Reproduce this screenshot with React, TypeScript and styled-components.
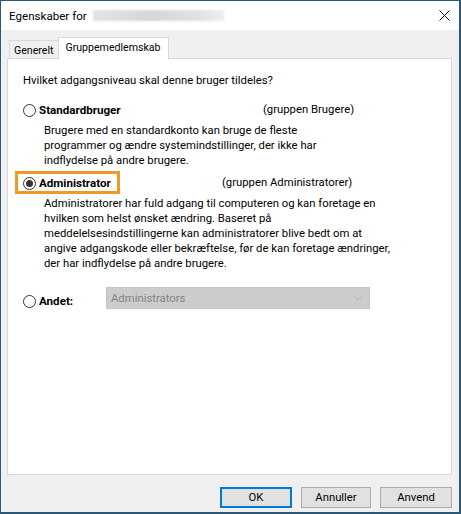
import styled, { createGlobalStyle } from "styled-components";

const GlobalStyle = createGlobalStyle`
  html, body {
    margin: 0;
    padding: 0;
    background: #ffffff;
  }
  body {
    font-family: Roboto, "Noto Sans", sans-serif;
    font-size: 11.3px;
    color: #000000;
  }
`;

const Window = styled.div`
  box-sizing: border-box;
  width: 461px;
  height: 514px;
  border: 1px solid #2b5876;
  border-right-width: 2px;
  border-bottom-width: 2px;
  display: flex;
  flex-direction: column;
  background: #f0f0f0;
`;

const TitleBar = styled.div`
  height: 29px;
  background: #ffffff;
  display: flex;
  align-items: center;
  padding-left: 8px;
  padding-right: 9px;
`;

const TitleText = styled.span`
  font-size: 11.6px;
  line-height: 16px;
`;

const BlurredName = styled.div`
  width: 131px;
  height: 11px;
  margin-left: 6px;
  background: linear-gradient(90deg, #e4e4e4, #d6d6d6 45%, #e2e2e2 80%, #eeeeee);
  filter: blur(1px);
`;

const CloseButton = styled.div`
  margin-left: auto;
  width: 11px;
  height: 11px;
  display: flex;
`;

const Body = styled.div`
  flex: 1;
  display: flex;
  flex-direction: column;
  padding: 0 7px 0 6px;
`;

const TabStrip = styled.div`
  height: 28px;
  display: flex;
  align-items: flex-end;
  padding-left: 2px;
`;

const Tab = styled.div<{ $active?: boolean }>`
  box-sizing: border-box;
  position: relative;
  display: flex;
  align-items: center;
  border: 1px solid #d9d9d9;
  border-bottom: none;
  font-size: 10.6px;
  white-space: nowrap;
  height: ${({ $active }) => ($active ? "22px" : "18px")};
  margin-bottom: ${({ $active }) => ($active ? "-1px" : "0")};
  margin-left: ${({ $active }) => ($active ? "-1px" : "0")};
  padding: ${({ $active }) => ($active ? "0 7px 3px 6px" : "1px 5px 0 4px")};
  background: ${({ $active }) => ($active ? "#ffffff" : "#f0f0f0")};
  z-index: ${({ $active }) => ($active ? 1 : 0)};
`;

const Panel = styled.div`
  box-sizing: border-box;
  height: 417px;
  background: #ffffff;
  border: 1px solid #d9d9d9;
  padding: 14px 15px 0 15px;
  display: flex;
  flex-direction: column;
`;

const Question = styled.div`
  line-height: 16px;
  white-space: nowrap;
`;

const OptionRow = styled.div<{ $gap: number }>`
  position: relative;
  display: flex;
  align-items: center;
  height: 16px;
  margin-top: ${({ $gap }) => `${$gap}px`};
  white-space: nowrap;
`;

const RadioLabel = styled.div<{ $width: number }>`
  display: flex;
  align-items: center;
  width: ${({ $width }) => `${$width}px`};
  flex-shrink: 0;
`;

const Radio = styled.span<{ $checked?: boolean }>`
  box-sizing: border-box;
  width: 13px;
  height: 13px;
  border-radius: 50%;
  border: 1px solid #333333;
  background: #ffffff;
  display: flex;
  align-items: center;
  justify-content: center;
  margin-right: 3px;
  &::after {
    content: "";
    display: ${({ $checked }) => ($checked ? "block" : "none")};
    width: 7px;
    height: 7px;
    border-radius: 50%;
    background: #333333;
  }
`;

const OptionTitle = styled.span`
  font-size: 11.6px;
  font-weight: 700;
  line-height: 16px;
`;

const GroupName = styled.span`
  line-height: 16px;
`;

const Highlight = styled.div`
  position: absolute;
  left: -8px;
  top: -4px;
  width: 105px;
  height: 23px;
  box-sizing: border-box;
  border: 3px solid #f0992a;
  pointer-events: none;
`;

const Description = styled.div<{ $gap: number }>`
  margin-top: ${({ $gap }) => `${$gap}px`};
  padding-left: 21px;
  line-height: 15px;
  white-space: nowrap;
`;

const OtherRow = styled.div`
  display: flex;
  align-items: flex-start;
  margin-top: 16px;
  white-space: nowrap;
`;

const OtherLabel = styled(RadioLabel)`
  margin-top: 6px;
`;

const Dropdown = styled.div`
  box-sizing: border-box;
  width: 264px;
  height: 22px;
  background: #cccccc;
  border: 1px solid #c4c4c4;
  display: flex;
  align-items: center;
  padding: 0 6px 0 4px;
  color: #838383;
`;

const Chevron = styled.svg`
  margin-left: auto;
`;

const Footer = styled.div`
  flex: 1;
  display: flex;
  justify-content: flex-end;
  align-items: flex-start;
  padding-top: 12px;
  gap: 9px;
`;

const Button = styled.button<{ $default?: boolean; $width: number }>`
  box-sizing: border-box;
  width: ${({ $width }) => `${$width}px`};
  height: 21px;
  background: #e1e1e1;
  border: ${({ $default }) => ($default ? "2px solid #0078d7" : "1px solid #adadad")};
  font-family: Roboto, "Noto Sans", sans-serif;
  font-size: 11.3px;
  color: #000000;
  padding: 0;
`;

export default function App() {
  return (
    <>
      <GlobalStyle />
      <Window>
        <TitleBar>
          <TitleText>Egenskaber for</TitleText>
          <BlurredName />
          <CloseButton>
            <svg width="11" height="11" viewBox="0 0 11 11">
              <path d="M0.5 0.5 L10.5 10.5 M10.5 0.5 L0.5 10.5" stroke="#111" strokeWidth="1" />
            </svg>
          </CloseButton>
        </TitleBar>
        <Body>
          <TabStrip>
            <Tab>Generelt</Tab>
            <Tab $active>Gruppemedlemskab</Tab>
          </TabStrip>
          <Panel>
            <Question>Hvilket adgangsniveau skal denne bruger tildeles?</Question>

            <OptionRow $gap={13}>
              <RadioLabel $width={240}>
                <Radio />
                <OptionTitle>Standardbruger</OptionTitle>
              </RadioLabel>
              <GroupName>(gruppen Brugere)</GroupName>
            </OptionRow>
            <Description $gap={5}>
              Brugere med en standardkonto kan bruge de fleste
              <br />
              programmer og ændre systemindstillinger, der ikke har
              <br />
              indflydelse på andre brugere.
            </Description>

            <OptionRow $gap={7}>
              <RadioLabel $width={199}>
                <Radio $checked />
                <OptionTitle>Administrator</OptionTitle>
              </RadioLabel>
              <GroupName>(gruppen Administratorer)</GroupName>
              <Highlight />
            </OptionRow>
            <Description $gap={5}>
              Administratorer har fuld adgang til computeren og kan foretage en
              <br />
              hvilken som helst ønsket ændring. Baseret på
              <br />
              meddelelsesindstillingerne kan administratorer blive bedt om at
              <br />
              angive adgangskode eller bekræftelse, før de kan foretage ændringer,
              <br />
              der har indflydelse på andre brugere.
            </Description>

            <OtherRow>
              <OtherLabel $width={83}>
                <Radio />
                <OptionTitle>Andet:</OptionTitle>
              </OtherLabel>
              <Dropdown>
                Administrators
                <Chevron width="10" height="6" viewBox="0 0 10 6">
                  <polyline points="0.5,0.5 5,5 9.5,0.5" fill="none" stroke="#b8b8b8" strokeWidth="1" />
                </Chevron>
              </Dropdown>
            </OtherRow>
          </Panel>
          <Footer>
            <Button $default $width={72}>OK</Button>
            <Button $width={70}>Annuller</Button>
            <Button $width={72}>Anvend</Button>
          </Footer>
        </Body>
      </Window>
    </>
  );
}
